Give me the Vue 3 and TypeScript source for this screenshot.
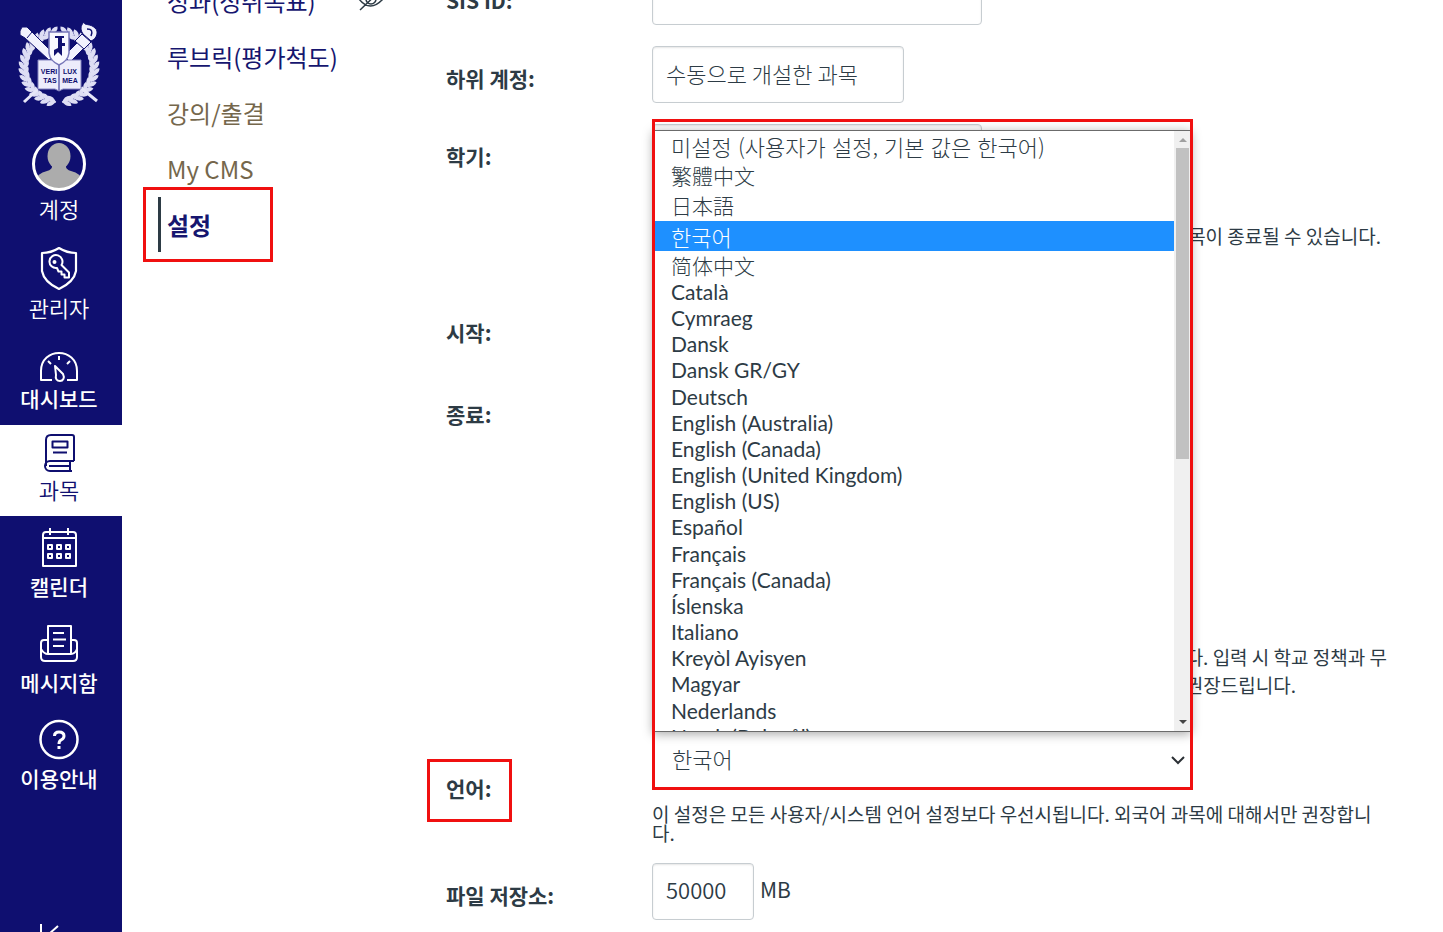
<script setup lang="ts">
import { ref } from 'vue'

interface NavItem {
  id: string
  label: string
  height: number
  strong?: boolean
  active?: boolean
}

const navItems: NavItem[] = [
  { id: 'account', label: '계정', height: 68 },
  { id: 'admin', label: '관리자', height: 60 },
  { id: 'dashboard', label: '대시보드', height: 52, strong: true },
  { id: 'courses', label: '과목', height: 52, active: true },
  { id: 'calendar', label: '캘린더', height: 58, strong: true },
  { id: 'inbox', label: '메시지함', height: 57, strong: true },
  { id: 'help', label: '이용안내', height: 57, strong: true },
]

const languages: { name: string; lang: string }[] = [
  { name: '미설정 (사용자가 설정, 기본 값은 한국어)', lang: 'ko' },
  { name: '繁體中文', lang: 'zh-Hant' },
  { name: '日本語', lang: 'ja' },
  { name: '한국어', lang: 'ko' },
  { name: '简体中文', lang: 'zh-Hans' },
  { name: 'Català', lang: 'ca' },
  { name: 'Cymraeg', lang: 'cy' },
  { name: 'Dansk', lang: 'da' },
  { name: 'Dansk GR/GY', lang: 'da' },
  { name: 'Deutsch', lang: 'de' },
  { name: 'English (Australia)', lang: 'en-AU' },
  { name: 'English (Canada)', lang: 'en-CA' },
  { name: 'English (United Kingdom)', lang: 'en-GB' },
  { name: 'English (US)', lang: 'en-US' },
  { name: 'Español', lang: 'es' },
  { name: 'Français', lang: 'fr' },
  { name: 'Français (Canada)', lang: 'fr-CA' },
  { name: 'Íslenska', lang: 'is' },
  { name: 'Italiano', lang: 'it' },
  { name: 'Kreyòl Ayisyen', lang: 'ht' },
  { name: 'Magyar', lang: 'hu' },
  { name: 'Nederlands', lang: 'nl' },
  { name: 'Norsk (Bokmål)', lang: 'nb' },
]

const selected = ref('한국어')
const sisId = ref('')
const quota = ref('50000')

const leaves = Array.from({ length: 17 }, (_, i) => {
  const deg = 98 + i * 10
  const a = (deg * Math.PI) / 180
  return `translate(${42 + 35 * Math.cos(a)} ${47 + 35 * Math.sin(a)}) rotate(${deg + 90})`
})
</script>

<template>
  <div class="app">
    <nav class="global-nav" aria-label="전체 메뉴">
      <a class="brand" href="#" aria-label="홈">
        <svg width="84" height="88" viewBox="0 0 84 88">
          <g fill="#dedef4">
            <g v-for="side in [1, -1]" :key="side" :transform="side === 1 ? '' : 'translate(84 0) scale(-1 1)'">
              <g v-for="(t, i) in leaves" :key="i" :transform="t">
                <path d="M-2 1 Q1 -6 7 -5 Q7 1 -2 1Z" />
                <path d="M-2 -1 Q1 6 7 5 Q7 -1 -2 -1Z" />
              </g>
            </g>
          </g>
          <g stroke="#10106f" stroke-width="1">
            <path fill="#f1f1fd" d="M3 11 L5 7 L10 7 L14 11 L38 35 L32 40 L8 18 L3 15Z" />
            <path d="M10 18 L15 12" fill="none" />
            <path fill="#f1f1fd" d="M47 36 L67 16 L73 22 L53 42Z" />
            <path fill="#f1f1fd" d="M58 21 L65 14 L74 22 L67 29Z" />
            <path fill="#f1f1fd" d="M66 14 C62 8 65 4 67 2 C67 6 73 3 78 8 C82 11 80 19 74 21Z" />
          </g>
          <path d="M70 9 Q77 9 74 16" fill="none" stroke="#10106f" stroke-width="1.500" />
          <g stroke="#e6e6f8" stroke-width="3">
            <path d="M20 70 L7 82 M64 68 L80 81" />
          </g>
          <path d="M21 40 H38 L42 43 L46 40 H64 V69 H46 L42 71 L38 69 H21Z" fill="#ececfb" stroke="#8484c0" />
          <path d="M42 43 V71" stroke="#8484c0" stroke-width="2" />
          <path d="M32 12 H52 V33 Q51 41 42 45 Q33 41 32 33Z" fill="#f8f8ff" stroke="#7676b8" stroke-width="1.500" />
          <path d="M38 16 H47 V18 H45 V23 H48 V26 H45 V36 L41 32 L37 36 V30 L41 28 V18 H38Z" fill="#10106f" />
          <g class="motto">
            <text x="32" y="54">VERI</text>
            <text x="53" y="54">LUX</text>
            <text x="33" y="63">TAS</text>
            <text x="53" y="63">MEA</text>
          </g>
        </svg>
      </a>

      <a
        v-for="item in navItems"
        :key="item.id"
        href="#"
        class="nav-item"
        :class="{ active: item.active, strong: item.strong }"
      >
        <svg
          width="60"
          :height="item.height"
          :viewBox="`0 0 60 ${item.height}`"
          fill="none"
          stroke="currentColor"
          stroke-width="2"
          stroke-linejoin="round"
        >
          <template v-if="item.id === 'account'">
            <clipPath id="avatar"><circle cx="30" cy="36" r="25" /></clipPath>
            <g clip-path="url(#avatar)" fill="#acacac" stroke="none">
              <ellipse cx="30" cy="28" rx="11.500" ry="13" />
              <path d="M23 36 H37 Q36 42 42 43 Q52 45 54 54 V64 H6 V54 Q8 45 18 43 Q24 42 23 36Z" />
            </g>
            <circle cx="30" cy="36" r="25.5" stroke-width="3" />
          </template>

          <template v-else-if="item.id === 'admin'">
            <path d="M30 13 Q38 18 47 18 V36 Q45 47 30 54 Q15 47 13 36 V18 Q22 18 30 13Z" stroke-width="2.2" />
            <path d="M32.500 30 L40 37.500 V42.500 H35.500 V39.500 H32.500 V36.500 H29.500 L28 33 A6.500 6.500 0 1 1 32.500 30 Z" />
            <circle cx="25.500" cy="27" r="1" />
          </template>

          <template v-else-if="item.id === 'dashboard'">
            <path d="M23 46 H12 V37 C12 13 48 13 48 37 V46 H38" />
            <path d="M26 32 L34 40 C36 44 34 47 31 47 C28 47 26 45 27 41Z" />
            <path d="M30 22 V26 M19 27 L22 30 M41 27 L38 30" />
          </template>

          <g v-else-if="item.id === 'courses'" transform="translate(1 0)">
            <path d="M44 36 H20 A4.500 4.500 0 0 0 20 46 H42 M16 41 V15 Q16 10 21 10 H42 Q44 10 44 12 V36 M40 36 V46 M19 41 H39" />
            <path d="M22.500 16.500 H37.500 V22.500 H22.500Z M23 27.500 H37" />
          </g>

          <template v-else-if="item.id === 'calendar'">
            <path d="M14 50 V19 Q14 16 17 16 H44 Q47 16 47 19 V50Z M14 22 H47 M21 12 V19 M39 12 V19" />
            <path d="M19 29 H23 V33 H19Z M28 29 H32 V33 H28Z M37 29 H41 V33 H37Z M19 38 H23 V42 H19Z M28 38 H32 V42 H28Z M37 38 H41 V42 H37Z" />
          </template>

          <template v-else-if="item.id === 'inbox'">
            <path d="M19 41 V13 H42 V41" />
            <path d="M19 27 H15 Q12 27 12 30 V44 Q12 48 16 48 H44 Q48 48 48 44 V30 Q48 27 45 27 H42 M12 36 Q15 41 19 41 H42 Q46 41 48 36" />
            <path d="M24 20 H35 M24 26.500 H37 M24 33 H35" />
          </template>

          <template v-else>
            <circle cx="30" cy="30.500" r="18.500" stroke-width="2.500" />
            <path d="M25.500 27 Q25.500 23 30 23 Q35 23 35 27 Q35 29.500 32 31 Q30 32 30 35" stroke-width="3" />
            <path d="M30 37 V40" stroke-width="3" />
          </template>
        </svg>
        <span>{{ item.label }}</span>
      </a>

      <button class="collapse" type="button" aria-label="메뉴 접기">
        <svg width="60" height="24" viewBox="0 0 60 24" fill="none" stroke="currentColor" stroke-width="2">
          <path d="M12 2 V22 M29 4 L20 12 L29 20 M20 12 H44" />
        </svg>
      </button>
    </nav>

    <aside class="course-menu">
      <a href="#">
        성과(성취목표)
        <svg class="hidden-icon" width="30" height="24" viewBox="0 0 30 24" fill="none" stroke="#2d3b45" stroke-width="1.500">
          <path d="M3 10 Q14 -2 27 10 Q14 24 3 10Z M4 21 L26 0" />
          <circle cx="15" cy="10" r="5" />
        </svg>
      </a>
      <a href="#">루브릭(평가척도)</a>
      <a href="#" class="muted">강의/출결</a>
      <a href="#" class="muted">My CMS</a>
      <a href="#" class="current" aria-current="page">설정</a>
    </aside>

    <main class="content">
      <form class="settings" @submit.prevent>
        <div class="row">
          <label class="name" for="sis">SIS ID:</label>
          <div class="field"><input id="sis" v-model="sisId" class="box wide" type="text" /></div>
        </div>
        <div class="row">
          <label class="name" for="sub-account">하위 계정:</label>
          <div class="field">
            <select id="sub-account" class="box account">
              <option>수동으로 개설한 과목</option>
            </select>
          </div>
        </div>
        <div class="row term">
          <label class="name" for="term">학기:</label>
          <div class="field">
            <select id="term" class="box wide"></select>
            <p class="note term-note">과목이 종료될 수 있습니다.</p>
          </div>
        </div>
        <div class="row start">
          <span class="name">시작:</span>
        </div>
        <div class="row end">
          <span class="name">종료:</span>
          <div class="field">
            <p class="note end-note">다. 입력 시 학교 정책과 무</p>
            <p class="note end-note second">권장드립니다.</p>
          </div>
        </div>
        <div class="row language">
          <label class="name marked" for="language">언어:</label>
          <div class="field">
            <div class="picker">
              <select id="language" v-model="selected" class="box">
                <option v-for="l in languages" :key="l.name" :value="l.name">{{ l.name }}</option>
              </select>
              <svg class="chevron" width="14" height="10" viewBox="0 0 14 10" fill="none" stroke="#2b3035" stroke-width="2">
                <path d="M1 2 L7 8 L13 2" />
              </svg>
              <div class="popup">
                <ul role="listbox" aria-label="언어">
                  <li
                    v-for="l in languages"
                    :key="l.name"
                    role="option"
                    :lang="l.lang"
                    :aria-selected="l.name === selected"
                    @click="selected = l.name"
                  >
                    {{ l.name }}
                  </li>
                </ul>
                <div class="scrollbar">
                  <svg width="10" height="6" viewBox="0 0 10 6"><path d="M1 5 L5 1 L9 5Z" fill="#a0a0a0" /></svg>
                  <div class="thumb"></div>
                  <svg width="10" height="6" viewBox="0 0 10 6"><path d="M1 1 L5 5 L9 1Z" fill="#454545" /></svg>
                </div>
              </div>
              <div class="outline"></div>
            </div>
            <p class="note tight">이 설정은 모든 사용자/시스템 언어 설정보다 우선시됩니다. 외국어 과목에 대해서만 권장합니다.</p>
          </div>
        </div>
        <div class="row">
          <label class="name" for="quota">파일 저장소:</label>
          <div class="field quota">
            <input id="quota" v-model="quota" class="box" type="text" />
            <span>MB</span>
          </div>
        </div>
      </form>
    </main>
  </div>
</template>

<style>
body {
  margin: 0;
  background: #fff;
}
</style>

<style scoped>
.app {
  display: flex;
  height: 100vh;
  overflow: hidden;
  color: #2d3b45;
  background: #fff;
  font-family: "Noto Sans CJK KR", sans-serif;
}
.app *,
.app *::before {
  box-sizing: border-box;
}
a {
  text-decoration: none;
}

/* Global navigation */
.global-nav {
  display: flex;
  flex: 0 0 122px;
  flex-direction: column;
  color: #fff;
  background: #0f0f70;
}
.brand {
  display: flex;
  justify-content: center;
  padding: 20px 4px 20px 0;
}
.brand svg {
  display: block;
}
.motto {
  fill: #10106f;
  font: 700 7px "Liberation Sans", sans-serif;
  text-anchor: middle;
}
.nav-item {
  display: flex;
  flex-direction: column;
  align-items: center;
  padding: 0 4px 15px 0;
  color: inherit;
  font-size: 22px;
  font-weight: 350;
  line-height: 24px;
}
.nav-item.strong {
  font-size: 21px;
  font-weight: 500;
}
.nav-item.active {
  color: #0f0f70;
  background: #fff;
}
.nav-item svg {
  flex: none;
}
.collapse {
  margin: auto 0 -14px;
  padding: 0 4px 0 0;
  border: 0;
  color: inherit;
  background: none;
}
.collapse svg {
  display: block;
  margin: 0 auto;
}

/* Course menu */
.course-menu {
  display: flex;
  flex: 0 0 282px;
  flex-direction: column;
  gap: 1px;
  margin-top: -27px;
  padding: 0 18px 0 36px;
}
.course-menu a {
  position: relative;
  display: flex;
  align-items: center;
  justify-content: space-between;
  height: 55px;
  padding-left: 9px;
  color: #16166f;
  font-size: 24px;
  line-height: 56px;
}
.course-menu .muted {
  color: #75674c;
}
.course-menu .current {
  border-left: 3px solid #2d3b45;
  padding-left: 6px;
  font-weight: 700;
}
.course-menu .current::before {
  content: "";
  position: absolute;
  inset: -10px 113px -10px -18px;
  border: 3px solid #f01010;
}

/* Settings form */
.content {
  flex: 1;
  min-width: 0;
  padding: 0 52px 0 42px;
}
.settings {
  margin-top: -32px;
}
.row {
  display: grid;
  grid-template-columns: 206px minmax(0, 1fr);
  min-height: 78px;
}
.row.term {
  min-height: 176px;
}
.row.start {
  min-height: 82px;
}
.row.end {
  min-height: 349px;
}
.row.language {
  min-height: 132px;
}
.name {
  position: relative;
  justify-self: start;
  align-self: start;
  margin-top: 20px;
  font-size: 21px;
  font-weight: 700;
  line-height: 24px;
}
.language .name {
  margin-top: 45px;
}
.marked::before {
  content: "";
  position: absolute;
  inset: -17px -21px -22px -19px;
  border: 3px solid #f01010;
}
.box {
  display: block;
  width: 100%;
  height: 57px;
  margin: 0;
  padding: 0 13px 4px;
  border: 1px solid #c7cdd1;
  border-radius: 4px;
  appearance: none;
  color: #2d3b45;
  background: #fff;
  box-shadow: inset 0 1px 2px #0000001a;
  font-family: "Noto Sans CJK KR", sans-serif;
  font-size: 22px;
  font-weight: 300;
}
.wide {
  width: 330px;
}
.account {
  width: 252px;
}
.note {
  margin: 0;
  font-size: 19px;
  line-height: 28px;
}
.term-note {
  margin-top: 41px;
  padding-right: 10px;
  text-align: right;
}
.end-note {
  margin-top: 261px;
  padding-right: 4px;
  text-align: right;
}
.end-note.second {
  margin-top: 0;
  padding-right: 95px;
}
.tight {
  margin-top: 16px;
  line-height: 19px;
  word-break: break-all;
}
.quota {
  display: flex;
  align-items: flex-start;
  gap: 6px;
}
.quota .box {
  width: 102px;
  padding-bottom: 6px;
  font-weight: 350;
}
.quota span {
  font-size: 21px;
  line-height: 53px;
}

/* Language picker */
.picker {
  position: relative;
  width: 541px;
}
.picker .box {
  padding-left: 19px;
  border-color: transparent;
  box-shadow: none;
}
.chevron {
  position: absolute;
  top: 24px;
  right: 8px;
}
.popup {
  position: absolute;
  right: 2px;
  bottom: 56px;
  left: 1px;
  display: flex;
  height: 602px;
  overflow: hidden;
  border: 1px solid #6b6b6b;
  border-width: 1px 0;
  background: #fff;
  box-shadow: 0 2px 10px #00000059;
}
.popup ul {
  display: grid;
  flex: 1;
  grid-template-rows: repeat(5, 30px) repeat(18, 1fr);
  height: 621px;
  margin: 0;
  padding: 0;
  list-style: none;
  font-family: Lato, "Noto Sans CJK KR", sans-serif;
  font-size: 21px;
}
.popup li {
  padding-left: 18px;
  line-height: 22px;
}
.popup li:nth-child(-n + 5) {
  font-weight: 300;
  line-height: 30px;
}
.popup li:lang(ko) {
  font-family: "Noto Sans CJK KR", sans-serif;
  font-size: 22px;
}
.popup li[aria-selected="true"] {
  color: #fff;
  background: #1e90ff;
}
.scrollbar {
  display: flex;
  flex: 0 0 17px;
  flex-direction: column;
  align-items: center;
  padding: 6px 0;
  background: #f0f0f0;
}
.scrollbar svg:last-child {
  margin-top: auto;
}
.thumb {
  width: 13px;
  height: 311px;
  margin-top: 5px;
  background: #c1c1c1;
}
.outline {
  position: absolute;
  inset: -612px 0 -2px;
  border: 3px solid #f01010;
  pointer-events: none;
}
</style>
